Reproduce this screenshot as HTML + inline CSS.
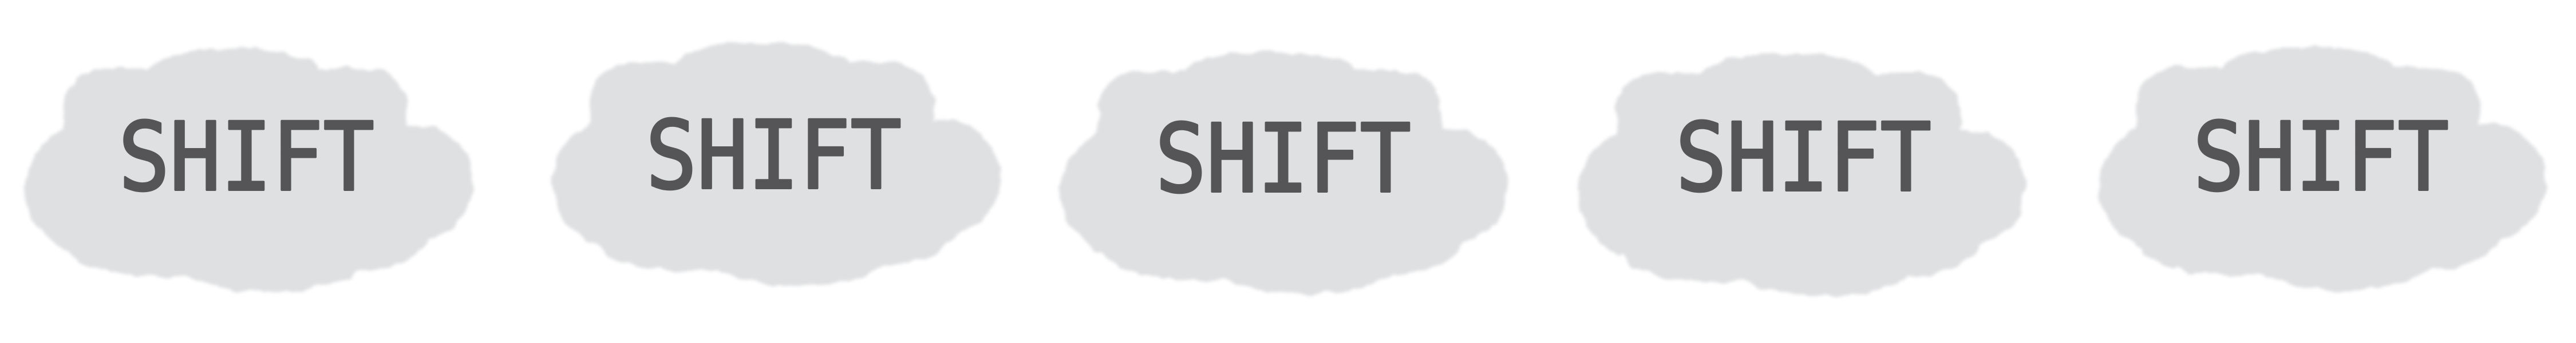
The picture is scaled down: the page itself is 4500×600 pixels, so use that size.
<!DOCTYPE html>
<html><head><meta charset="utf-8"><style>
html,body{margin:0;padding:0;background:#fff;width:4500px;height:600px;overflow:hidden}
</style></head><body>
<svg width="4500" height="600" viewBox="0 0 4500 600" xmlns="http://www.w3.org/2000/svg">
<defs>
<filter id="rough" x="-10%" y="-10%" width="120%" height="120%">
<feTurbulence type="fractalNoise" baseFrequency="0.03" numOctaves="3" seed="4" result="n"/>
<feDisplacementMap in="SourceGraphic" in2="n" scale="16" xChannelSelector="R" yChannelSelector="G"/>
<feGaussianBlur stdDeviation="3"/>
</filter>
<g id="cloud" fill="#dfe0e2">
<rect x="110" y="120" width="600" height="350" rx="70"/>
<ellipse cx="160" cy="330" rx="115" ry="115"/>
<ellipse cx="730" cy="320" rx="95" ry="100"/>
<ellipse cx="470" cy="425" rx="190" ry="85"/>
<ellipse cx="410" cy="125" rx="150" ry="40"/>
<ellipse cx="280" cy="435" rx="150" ry="50"/>
<ellipse cx="620" cy="405" rx="130" ry="70"/>
</g>
</defs>
<g filter="url(#rough)">
<use href="#cloud" x="0" y="0"/>
<use href="#cloud" x="921" y="-10"/>
<use href="#cloud" x="1808" y="5"/>
<use href="#cloud" x="2712" y="8"/>
<use href="#cloud" x="3622" y="-3"/>
</g>
<g font-family="'DejaVu Sans Mono','Liberation Mono',monospace" font-size="165" fill="#555557" stroke="#555557" stroke-width="4" stroke-linejoin="round">
<text x="207" y="332" textLength="447" lengthAdjust="spacingAndGlyphs">SHIFT</text>
<text x="1128" y="329" textLength="447" lengthAdjust="spacingAndGlyphs">SHIFT</text>
<text x="2018" y="335" textLength="447" lengthAdjust="spacingAndGlyphs">SHIFT</text>
<text x="2927" y="333" textLength="447" lengthAdjust="spacingAndGlyphs">SHIFT</text>
<text x="3831" y="332" textLength="447" lengthAdjust="spacingAndGlyphs">SHIFT</text>
</g>
</svg>
</body></html>
